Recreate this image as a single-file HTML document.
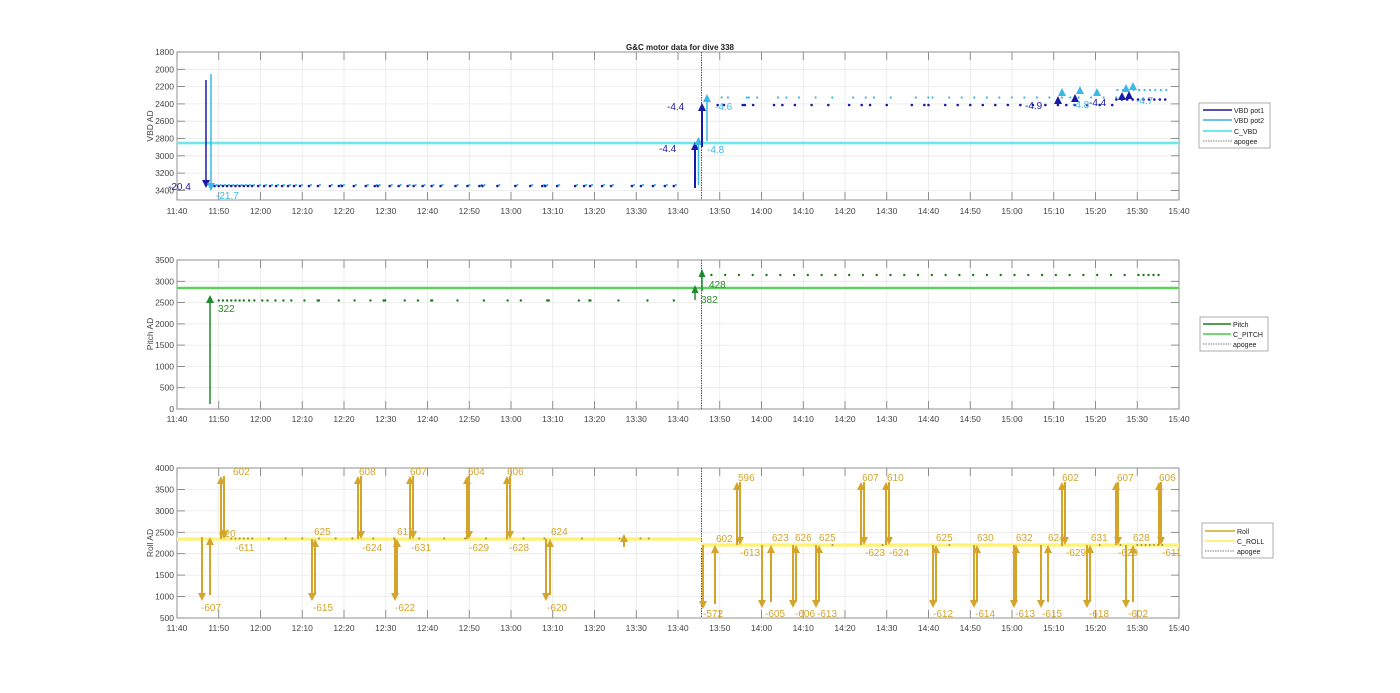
<!DOCTYPE html>
<html><head><meta charset="utf-8"><style>
html,body{margin:0;padding:0;background:#fff;}
svg{display:block;font-family:"Liberation Sans",sans-serif;}
.t{font-size:8.5px;fill:#444;}
.yl{font-size:8.5px;fill:#444;text-anchor:end;}
.xl{font-size:8.5px;fill:#444;text-anchor:middle;}
.lg{font-size:7px;fill:#222;}
</style></head><body>
<svg id="s" width="1400" height="693" viewBox="0 0 1400 693" xmlns="http://www.w3.org/2000/svg">
<rect width="1400" height="693" fill="#fff"/>
<g id="grid"></g>
<g id="data"></g>
<text x="680" y="50" text-anchor="middle" style="font-size:8px;font-weight:bold;fill:#222">G&amp;C motor data for dive 338</text>
<g class="yl">
<text x="174" y="55">1800</text><text x="174" y="72.3">2000</text><text x="174" y="89.6">2200</text><text x="174" y="106.9">2400</text><text x="174" y="124.2">2600</text><text x="174" y="141.5">2800</text><text x="174" y="158.8">3000</text><text x="174" y="176.1">3200</text><text x="174" y="193.4">3400</text>
<text x="174" y="263">3500</text><text x="174" y="284.3">3000</text><text x="174" y="305.6">2500</text><text x="174" y="326.9">2000</text><text x="174" y="348.1">1500</text><text x="174" y="369.4">1000</text><text x="174" y="390.7">500</text><text x="174" y="412">0</text>
<text x="174" y="471">4000</text><text x="174" y="492.4">3500</text><text x="174" y="513.9">3000</text><text x="174" y="535.3">2500</text><text x="174" y="556.7">2000</text><text x="174" y="578.1">1500</text><text x="174" y="599.6">1000</text><text x="174" y="621">500</text>
</g>
<text transform="translate(153,126) rotate(-90)" text-anchor="middle" class="t">VBD AD</text>
<text transform="translate(153,334) rotate(-90)" text-anchor="middle" class="t">Pitch AD</text>
<text transform="translate(153,543) rotate(-90)" text-anchor="middle" class="t">Roll AD</text>
<g class="xl">
<text x="177" y="214">11:40</text><text x="218.75" y="214">11:50</text><text x="260.5" y="214">12:00</text><text x="302.25" y="214">12:10</text><text x="344" y="214">12:20</text><text x="385.75" y="214">12:30</text><text x="427.5" y="214">12:40</text><text x="469.25" y="214">12:50</text><text x="511" y="214">13:00</text><text x="552.75" y="214">13:10</text><text x="594.5" y="214">13:20</text><text x="636.25" y="214">13:30</text><text x="678" y="214">13:40</text><text x="719.75" y="214">13:50</text><text x="761.5" y="214">14:00</text><text x="803.25" y="214">14:10</text><text x="845" y="214">14:20</text><text x="886.75" y="214">14:30</text><text x="928.5" y="214">14:40</text><text x="970.25" y="214">14:50</text><text x="1012" y="214">15:00</text><text x="1053.75" y="214">15:10</text><text x="1095.5" y="214">15:20</text><text x="1137.25" y="214">15:30</text><text x="1179" y="214">15:40</text>
<text x="177" y="422">11:40</text><text x="218.75" y="422">11:50</text><text x="260.5" y="422">12:00</text><text x="302.25" y="422">12:10</text><text x="344" y="422">12:20</text><text x="385.75" y="422">12:30</text><text x="427.5" y="422">12:40</text><text x="469.25" y="422">12:50</text><text x="511" y="422">13:00</text><text x="552.75" y="422">13:10</text><text x="594.5" y="422">13:20</text><text x="636.25" y="422">13:30</text><text x="678" y="422">13:40</text><text x="719.75" y="422">13:50</text><text x="761.5" y="422">14:00</text><text x="803.25" y="422">14:10</text><text x="845" y="422">14:20</text><text x="886.75" y="422">14:30</text><text x="928.5" y="422">14:40</text><text x="970.25" y="422">14:50</text><text x="1012" y="422">15:00</text><text x="1053.75" y="422">15:10</text><text x="1095.5" y="422">15:20</text><text x="1137.25" y="422">15:30</text><text x="1179" y="422">15:40</text>
<text x="177" y="631">11:40</text><text x="218.75" y="631">11:50</text><text x="260.5" y="631">12:00</text><text x="302.25" y="631">12:10</text><text x="344" y="631">12:20</text><text x="385.75" y="631">12:30</text><text x="427.5" y="631">12:40</text><text x="469.25" y="631">12:50</text><text x="511" y="631">13:00</text><text x="552.75" y="631">13:10</text><text x="594.5" y="631">13:20</text><text x="636.25" y="631">13:30</text><text x="678" y="631">13:40</text><text x="719.75" y="631">13:50</text><text x="761.5" y="631">14:00</text><text x="803.25" y="631">14:10</text><text x="845" y="631">14:20</text><text x="886.75" y="631">14:30</text><text x="928.5" y="631">14:40</text><text x="970.25" y="631">14:50</text><text x="1012" y="631">15:00</text><text x="1053.75" y="631">15:10</text><text x="1095.5" y="631">15:20</text><text x="1137.25" y="631">15:30</text><text x="1179" y="631">15:40</text>
</g>
<g style="font-size:10px">
<text x="168" y="190" fill="#1a1aa8">-20.4</text>
<text x="216" y="199" fill="#3ab8e8">-21.7</text>
<text x="667" y="110" fill="#1a1aa8">-4.4</text>
<text x="659" y="152" fill="#1a1aa8">-4.4</text>
<text x="715" y="110" fill="#3ab8e8">-4.6</text>
<text x="707" y="153" fill="#3ab8e8">-4.8</text>
<text x="1025" y="109" fill="#1a1aa8">-4.9</text>
<text x="1072" y="108" fill="#3ab8e8">-4.8</text>
<text x="1089" y="106" fill="#1a1aa8">-4.4</text>
<text x="1136" y="104" fill="#3ab8e8">-4.7</text>
</g>
<g style="font-size:10px" fill="#2e8b2e">
<text x="218" y="312">322</text><text x="701" y="303">382</text><text x="709" y="288">428</text>
</g>
<g style="font-size:10px" fill="#d4a52a">
<text x="233" y="475">602</text><text x="219" y="537">620</text><text x="201" y="611">-607</text><text x="235" y="551">-611</text>
<text x="313" y="611">-615</text><text x="314" y="535">625</text>
<text x="359" y="475">608</text><text x="362" y="551">-624</text>
<text x="395" y="611">-622</text><text x="397" y="535">617</text>
<text x="410" y="475">607</text><text x="411" y="551">-631</text>
<text x="468" y="475">604</text><text x="469" y="551">-629</text>
<text x="507" y="475">606</text><text x="509" y="551">-628</text>
<text x="547" y="611">-620</text><text x="551" y="535">624</text>
<text x="703" y="617">-572</text><text x="716" y="542">602</text>
<text x="738" y="481">596</text><text x="740" y="556">-613</text>
<text x="765" y="617">-605</text><text x="772" y="541">623</text>
<text x="795" y="617">-606</text><text x="795" y="541">626</text>
<text x="817" y="617">-613</text><text x="819" y="541">625</text>
<text x="862" y="481">607</text><text x="865" y="556">-623</text>
<text x="887" y="481">610</text><text x="889" y="556">-624</text>
<text x="933" y="617">-612</text><text x="936" y="541">625</text>
<text x="975" y="617">-614</text><text x="977" y="541">630</text>
<text x="1015" y="617">-613</text><text x="1016" y="541">632</text>
<text x="1042" y="617">-615</text><text x="1048" y="541">624</text>
<text x="1062" y="481">602</text><text x="1066" y="556">-629</text>
<text x="1089" y="617">-618</text><text x="1091" y="541">631</text>
<text x="1117" y="481">607</text><text x="1118" y="556">-629</text>
<text x="1128" y="617">-602</text><text x="1133" y="541">628</text>
<text x="1159" y="481">606</text><text x="1162" y="556">-611</text>
</g>
<g>
<rect x="1199" y="103" width="71" height="45" fill="#fff" stroke="#999" stroke-width="0.8"/>
<line x1="1203" y1="110" x2="1232" y2="110" stroke="#1a1a8c" stroke-width="1.5"/><text x="1234" y="113" class="lg">VBD pot1</text>
<line x1="1203" y1="120" x2="1232" y2="120" stroke="#3ab0e0" stroke-width="1.5"/><text x="1234" y="123" class="lg">VBD pot2</text>
<line x1="1203" y1="131" x2="1232" y2="131" stroke="#40e0e8" stroke-width="1.5"/><text x="1234" y="134" class="lg">C_VBD</text>
<line x1="1203" y1="141" x2="1232" y2="141" stroke="#555" stroke-width="0.8" stroke-dasharray="1.5,1"/><text x="1234" y="144" class="lg">apogee</text>
<rect x="1200" y="317" width="68" height="34" fill="#fff" stroke="#999" stroke-width="0.8"/>
<line x1="1203" y1="324" x2="1231" y2="324" stroke="#1d7a1d" stroke-width="1.5"/><text x="1233" y="327" class="lg">Pitch</text>
<line x1="1203" y1="334" x2="1231" y2="334" stroke="#44cc44" stroke-width="1.5"/><text x="1233" y="337" class="lg">C_PITCH</text>
<line x1="1203" y1="344" x2="1231" y2="344" stroke="#555" stroke-width="0.8" stroke-dasharray="1.5,1"/><text x="1233" y="347" class="lg">apogee</text>
<rect x="1202" y="523" width="71" height="35" fill="#fff" stroke="#999" stroke-width="0.8"/>
<line x1="1205" y1="531" x2="1235" y2="531" stroke="#d4a52a" stroke-width="1.5"/><text x="1237" y="534" class="lg">Roll</text>
<line x1="1205" y1="541" x2="1235" y2="541" stroke="#ffee55" stroke-width="1.5"/><text x="1237" y="544" class="lg">C_ROLL</text>
<line x1="1205" y1="551" x2="1235" y2="551" stroke="#555" stroke-width="0.8" stroke-dasharray="1.5,1"/><text x="1237" y="554" class="lg">apogee</text>
</g>
</svg>
<script>
(function(){
var NS="http://www.w3.org/2000/svg";
var G=document.getElementById("grid"),D=document.getElementById("data");
function el(p,n,a){var e=document.createElementNS(NS,n);for(var k in a)e.setAttribute(k,a[k]);p.appendChild(e);return e;}
function X(m){return 177+m*4.175;}
var axes=[{t:52,b:200,ys:[52,69.3,86.6,103.9,121.2,138.5,155.8,173.1,190.4]},
{t:260,b:409,ys:[260,281.3,302.6,323.9,345.1,366.4,387.7,409]},
{t:468,b:618,ys:[468,489.4,510.9,532.3,553.7,575.1,596.6,618]}];
axes.forEach(function(a){
 for(var i=0;i<=24;i++){var x=177+41.75*i;el(G,"line",{x1:x,y1:a.t,x2:x,y2:a.b,stroke:"#e8e8e8","stroke-width":0.8});
  el(G,"line",{x1:x,y1:a.b,x2:x,y2:a.b-8,stroke:"#777","stroke-width":0.8});el(G,"line",{x1:x,y1:a.t,x2:x,y2:a.t+8,stroke:"#777","stroke-width":0.8});}
 a.ys.forEach(function(y){el(G,"line",{x1:177,y1:y,x2:1179,y2:y,stroke:"#e8e8e8","stroke-width":0.8});
  el(G,"line",{x1:177,y1:y,x2:185,y2:y,stroke:"#777","stroke-width":0.8});el(G,"line",{x1:1171,y1:y,x2:1179,y2:y,stroke:"#777","stroke-width":0.8});});
 el(G,"rect",{x:177,y:a.t,width:1002,height:a.b-a.t,fill:"none",stroke:"#888","stroke-width":0.9});
 el(D,"line",{x1:701.5,y1:a.t,x2:701.5,y2:a.b,stroke:"#444","stroke-width":0.9,"stroke-dasharray":"1.5,1"});
});
function dot(x,y,c,r){el(D,"circle",{cx:x,cy:y,r:r||1.3,fill:c});}
function arrow(x,y1,y2,c,w,hw){
 var d=y2>y1?1:-1;hw=hw||4;
 el(D,"line",{x1:x,y1:y1,x2:x,y2:y2-d*6,stroke:c,"stroke-width":w||1.5});
 el(D,"polygon",{points:(x-hw)+","+(y2-d*8)+" "+(x+hw)+","+(y2-d*8)+" "+x+","+y2,fill:c});
}
var DB="#1a1aa8",LB="#3ab8e8";
el(D,"line",{x1:177,y1:143,x2:1179,y2:143,stroke:"#9ef0f0","stroke-width":3});
el(D,"line",{x1:177,y1:143,x2:1179,y2:143,stroke:"#40dde8","stroke-width":1});
var pre=[8,9,10,11,12,13,14,15,16,17,18,20,22,24,26,28,30,32,34,37,40,44,47,48,52,56,59,60,64,67,70,72,75,78,81,86,90,94,95,100,106,111,115,116,120,126,129,131,135,138,145,148,152,156,159];
pre.forEach(function(m){var mm=m<=18?m:18+(m-18)*(101/141);var x=X(mm);dot(x,186,DB);dot(x+2,185,LB,1.1);});
var post=[129.5,131,135.5,136,138,143,145,148,152,156,161,164,166,170,176,179,180,184,187,190,193,196,199,202,205,208,211,213,215,218,221,224];
post.forEach(function(m){var x=X(m);dot(x,105,DB);dot(x+4,97.5,LB,1.1);});
for(var m=225;m<=237;m+=1.3){dot(X(m),99.5,DB);dot(X(m)+1,90,LB,1.1);}
arrow(206,80,188,DB,1.5);arrow(211,74,191,LB,1.5);
arrow(695,188,142,DB,2);arrow(698.5,185,137,LB,1.5);arrow(702,147,103,DB,2);arrow(707,141,94,LB,1.5);
[[1058,104,DB],[1062,96,LB],[1075,102,DB],[1080,94,LB],[1097,96,LB],[1122,100,DB],[1126,92,LB],[1129,99,DB],[1133,90,LB]].forEach(function(t){
 el(D,"polygon",{points:(t[0]-4)+","+t[1]+" "+(t[0]+4)+","+t[1]+" "+t[0]+","+(t[1]-8),fill:t[2]});});
el(D,"line",{x1:177,y1:288,x2:1179,y2:288,stroke:"#aaeeaa","stroke-width":3});
el(D,"line",{x1:177,y1:288,x2:1179,y2:288,stroke:"#33bb33","stroke-width":1.2});
var PG="#1f7a1f";
[10,11,12,13,14,15,16,18,20,23,25,28,31,34,39,44,44.5,52,58,64,69,69.6,77,82,87,87.4,97,107,116,121,131,131.6,143,147,147.4,158,169,179].forEach(function(m){var mm=m<=16?m:16+(m-16)*(103/163);dot(X(mm),300.5,PG,1.2);});
for(var m=128;m<=236;m+=(m>228?1.2:3.3)){dot(X(m),275,PG,1.2);}
arrow(210,404,295,"#1f8a2f",1.5,4);arrow(695,300,285,"#1f8a2f",1.5,3.5);arrow(702,291,269,"#1f8a2f",1.5,3.5);
var GO="#d4a52a";
el(D,"line",{x1:177,y1:539,x2:701,y2:539,stroke:"#fff6a0","stroke-width":4});
el(D,"line",{x1:177,y1:539,x2:701,y2:539,stroke:"#ffee55","stroke-width":1.2});
el(D,"line",{x1:701,y1:545,x2:1179,y2:545,stroke:"#fff6a0","stroke-width":4});
el(D,"line",{x1:701,y1:545,x2:1179,y2:545,stroke:"#ffee55","stroke-width":1.2});
[6,13,14,15,16,17,18,22,26,30,34,38,42,47,52,58,64,69,74,79,83,88,97,106,111,113].forEach(function(m){dot(X(m),538.5,"#a08a40",1);});
[157,169,185,212,221,226,230,231,232,233,234,235,236].forEach(function(m){dot(X(m),545,"#a08a40",1);});
function pair(xu,xd,top){arrow(xu,539,top,GO,2,4);arrow(xd,top,539,GO,2,4);}
function pairDown(xd,xu,base,bot){arrow(xd,base,bot,GO,2,4);arrow(xu,bot-6,base,GO,2,4);}
pairDown(202,210,537,601);pair(221,224,476);
pairDown(312,315,539,601);pair(358,361,476);pairDown(395,397,539,601);pair(410,413,476);
pair(467,469,476);pair(507,510,476);pairDown(546,550,539,601);
arrow(624,547,534,GO,2,4);
arrow(703,545,609,GO,2,4);arrow(715,604,545,GO,2,4);
function pair2(xu,xd){arrow(xu,545,482,GO,2,4);arrow(xd,482,545,GO,2,4);}
function pd2(xd,xu){arrow(xd,545,608,GO,2,4);arrow(xu,602,545,GO,2,4);}
pair2(737,740);pd2(762,771);pd2(793,796);pd2(816,819);pair2(861,864);pair2(886,889);
pd2(933,936);pd2(974,977);pd2(1014,1016);pd2(1041,1048);pair2(1062,1065);pd2(1087,1090);pair2(1116,1118);pd2(1126,1133);pair2(1159,1161);
})();
</script>
</body></html>
